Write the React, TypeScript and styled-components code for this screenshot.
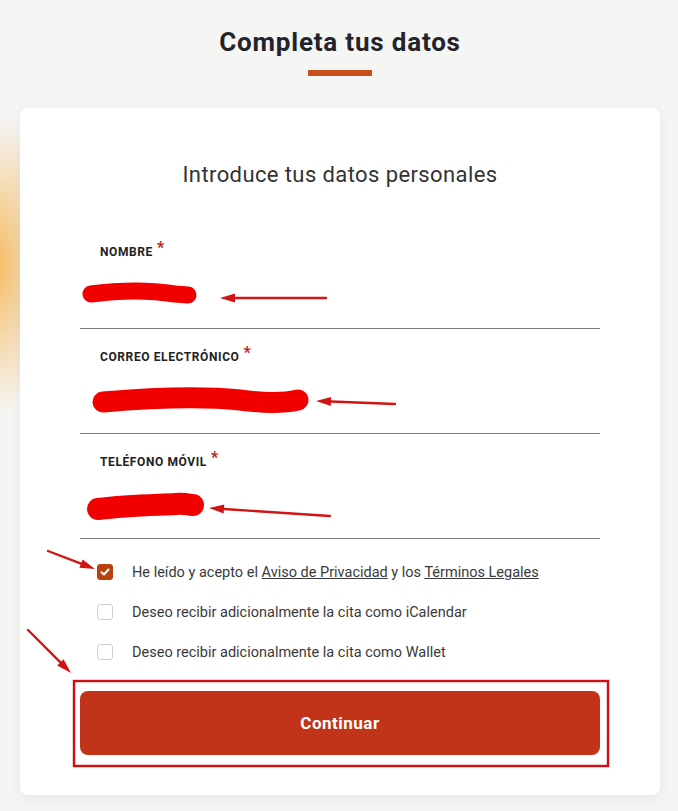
import React from 'react';
import styled, { createGlobalStyle } from 'styled-components';

const GlobalStyle = createGlobalStyle`
  html, body {
    margin: 0;
    padding: 0;
  }
  body {
    background: #f5f5f4;
    font-family: Roboto, "Liberation Sans", Arial, sans-serif;
    color: #2b2b2b;
  }
  * {
    box-sizing: border-box;
  }
`;

type FieldType = {
    label: string
    name: string
    type: string
}

const fields: FieldType[] = [
    { label: 'Nombre', name: 'nombre', type: 'text' },
    { label: 'Correo electrónico', name: 'email', type: 'email' },
    { label: 'Teléfono móvil', name: 'telefono', type: 'tel' },
];

const Page = styled.div`
    position: relative;
    width: 678px;
    height: 811px;
    overflow: hidden;
    padding: 26px 18px 0 20px;
    background:
        radial-gradient(ellipse 50px 150px at 0px 265px, rgba(246, 186, 96, 0.95), rgba(246, 186, 96, 0) 100%),
        #f5f5f4;
`;

const Heading = styled.h1`
    margin: 0;
    text-align: center;
    font-size: 26px;
    line-height: 32px;
    font-weight: 700;
    letter-spacing: 0.8px;
    color: #23232b;
`;

const Bar = styled.div`
    width: 64px;
    height: 6px;
    margin: 12px auto 0;
    background: #c8501c;
`;

const Card = styled.form`
    margin-top: 32px;
    width: 640px;
    height: 687px;
    background: #fff;
    border-radius: 8px;
    box-shadow: 0 4px 14px rgba(0, 0, 0, 0.06);
    padding: 53px 60px 40px;
`;

const CardTitle = styled.h2`
    margin: 0 0 35px;
    text-align: center;
    font-size: 22px;
    line-height: 28px;
    font-weight: 400;
    letter-spacing: 0.4px;
    color: #333;
`;

const Field = styled.div`
    height: 105px;
    padding: 15px 20px 0;
    border-bottom: 1px solid #7a7a7a;
    display: flex;
    flex-direction: column;
`;

const Label = styled.label`
    font-size: 12px;
    line-height: 18px;
    font-weight: 700;
    text-transform: uppercase;
    letter-spacing: 0.6px;
    color: #222;
`;

const Required = styled.span`
    color: #c4201a;
    font-size: 16px;
    margin-left: 4px;
    vertical-align: 3px;
`;

const Input = styled.input`
    margin-top: 14px;
    border: none;
    outline: none;
    background: transparent;
    height: 40px;
    font: inherit;
    font-size: 15px;
`;

const Options = styled.div`
    padding: 23px 0 0 17px;
    display: flex;
    flex-direction: column;
    gap: 20px;
`;

const Option = styled.label`
    display: flex;
    align-items: center;
    gap: 19px;
    height: 20px;
    font-size: 14.5px;
    color: #3a3a3a;

    a {
        color: inherit;
    }
`;

const Box = styled.span<{ checked?: boolean }>`
    width: 16px;
    height: 16px;
    border-radius: 3px;
    flex: none;
    display: flex;
    align-items: center;
    justify-content: center;
    background: ${p => (p.checked ? '#bb420f' : '#fff')};
    border: 1px solid ${p => (p.checked ? '#bb420f' : '#cfcfcf')};
`;

const Button = styled.button`
    margin-top: 29px;
    width: 520px;
    height: 64px;
    border: none;
    border-radius: 8px;
    background: #c13419;
    color: #fff;
    font-family: inherit;
    font-size: 17px;
    font-weight: 700;
    letter-spacing: 0.5px;
`;

const Marks = styled.svg`
    position: absolute;
    left: 0;
    top: 0;
    pointer-events: none;
`;

const Check = () => (
    <svg width="10" height="8" viewBox="0 0 10 8">
        <path d="M1.5 4.2 L4 6.5 L8.5 1.5" fill="none" stroke="#fff" strokeWidth="2" strokeLinecap="round" strokeLinejoin="round"/>
    </svg>
);

const Arrow = ({ x1, y1, x2, y2 }: { x1: number, y1: number, x2: number, y2: number }) => {
    const a = Math.atan2(y2 - y1, x2 - x1);
    const l = 15, w = 4.5;
    const bx = x2 - l * Math.cos(a), by = y2 - l * Math.sin(a);
    const px = -Math.sin(a) * w, py = Math.cos(a) * w;
    return (
        <g>
            <line x1={x1} y1={y1} x2={bx} y2={by} stroke="#d21414" strokeWidth="2.4" strokeLinecap="round"/>
            <polygon points={`${x2},${y2} ${bx + px},${by + py} ${bx - px},${by - py}`} fill="#d21414"/>
        </g>
    );
};

// las tachaduras y flechas rojas de la captura
const Annotations = () => (
    <Marks width="678" height="811">
        <g fill="none" stroke="#f20000" strokeLinecap="round">
            <path d="M91 294 C 120 290, 150 290, 175 294 L 188 295" strokeWidth="17"/>
            <path d="M103 402 C 150 398, 200 396, 240 400 C 270 404, 285 403, 298 400" strokeWidth="21"/>
            <path d="M98 509 C 130 505, 160 505, 175 504 C 185 503, 190 505, 193 505" strokeWidth="22"/>
        </g>
        <Arrow x1={326} y1={298} x2={220} y2={298}/>
        <Arrow x1={395} y1={404} x2={316} y2={401}/>
        <Arrow x1={330} y1={516} x2={209} y2={508}/>
        <Arrow x1={48} y1={551} x2={95} y2={569}/>
        <Arrow x1={28} y1={630} x2={71} y2={673}/>
        <rect x="74" y="681" width="534" height="85" fill="none" stroke="#d20d14" strokeWidth="2.4"/>
    </Marks>
);

export default function App() {
    return (
        <Page>
            <GlobalStyle/>
            <Heading>Completa tus datos</Heading>
            <Bar/>
            <Card onSubmit={e => e.preventDefault()}>
                <CardTitle>Introduce tus datos personales</CardTitle>
                {fields.map(f => (
                    <Field key={f.name}>
                        <Label htmlFor={f.name}>{f.label}<Required>*</Required></Label>
                        <Input id={f.name} name={f.name} type={f.type}/>
                    </Field>
                ))}
                <Options>
                    <Option>
                        <Box checked><Check/></Box>
                        <span>He leído y acepto el <a href="#">Aviso de Privacidad</a> y los <a href="#">Términos Legales</a></span>
                    </Option>
                    <Option>
                        <Box/>
                        <span>Deseo recibir adicionalmente la cita como iCalendar</span>
                    </Option>
                    <Option>
                        <Box/>
                        <span>Deseo recibir adicionalmente la cita como Wallet</span>
                    </Option>
                </Options>
                <Button type="submit">Continuar</Button>
            </Card>
            <Annotations/>
        </Page>
    );
}
